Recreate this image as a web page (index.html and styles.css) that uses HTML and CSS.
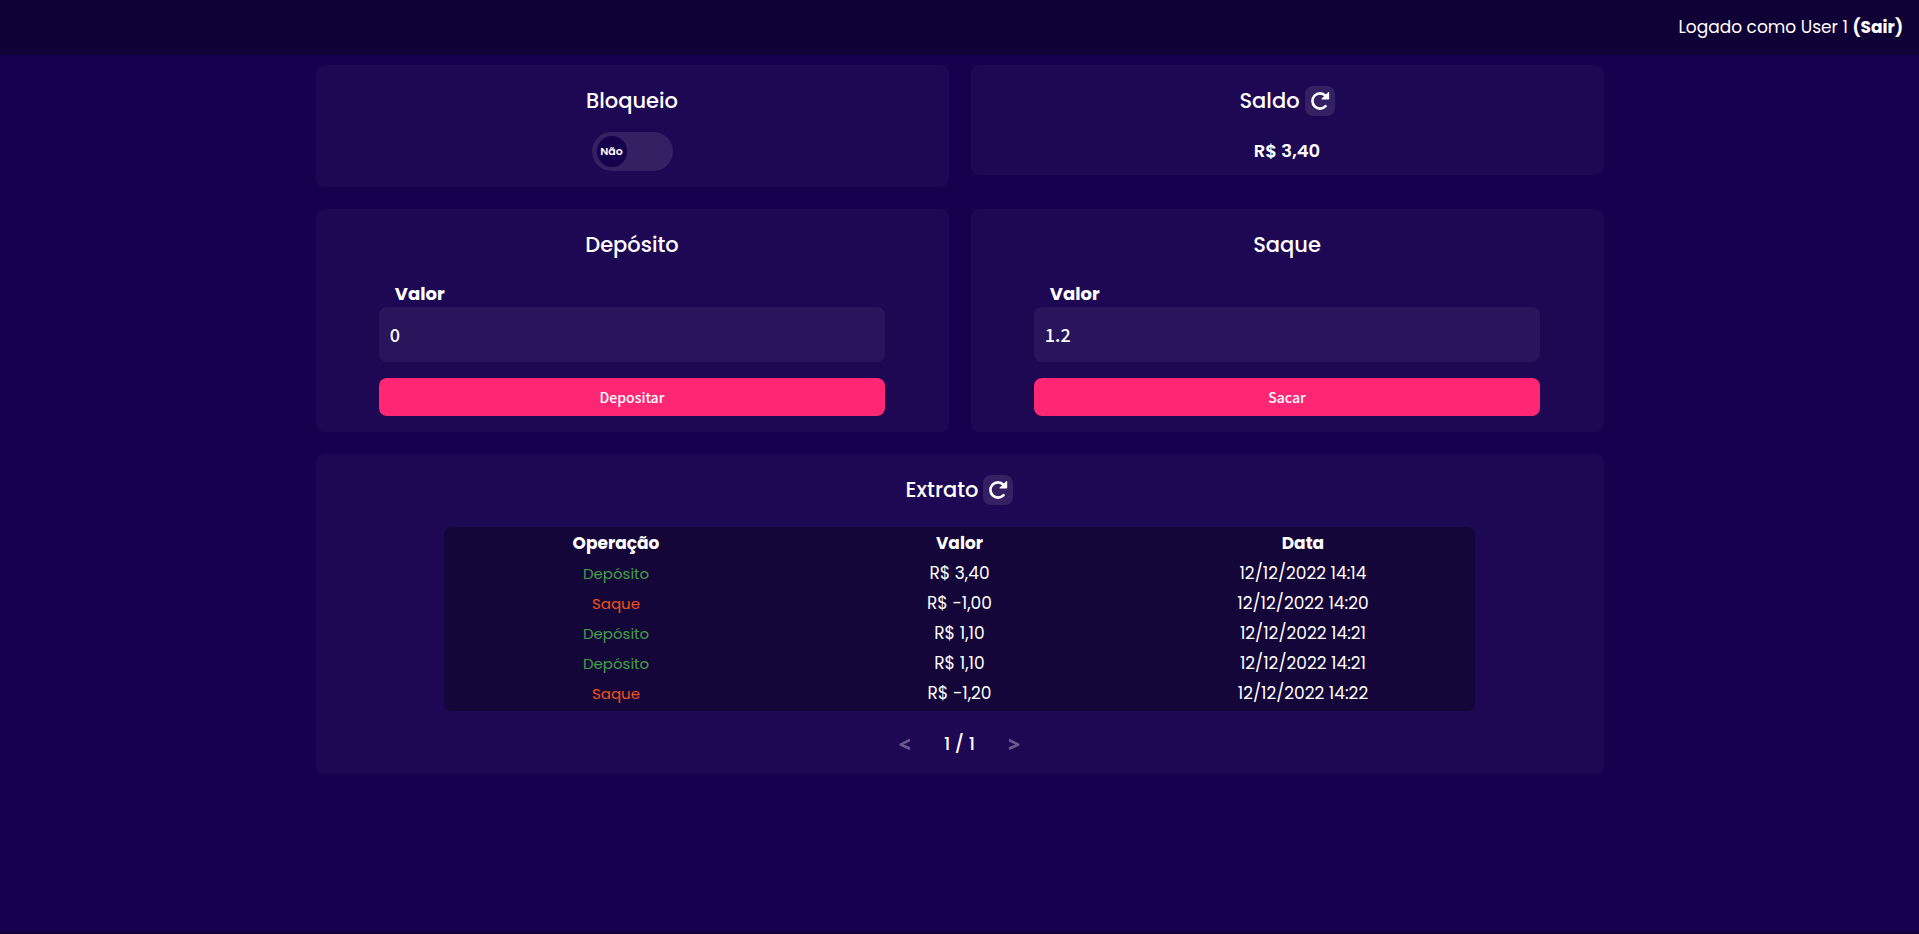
FILE: index.html
```html
<!DOCTYPE html>
<html lang="pt-BR">
<head>
<meta charset="utf-8">
<meta name="viewport" content="width=device-width, initial-scale=1">
<title>Conta</title>
<link rel="stylesheet" href="styles.css">
</head>
<body>
<header class="topbar">
  <p class="session">Logado como User 1 <a class="logout" href="#">(Sair)</a></p>
</header>
<main class="dashboard">
  <section class="card card-lock">
    <h2 class="card-title">Bloqueio</h2>
    <label class="switch">
      <input class="switch-input" type="checkbox" aria-label="Bloqueio">
      <span class="switch-knob">Não</span>
    </label>
  </section>
  <section class="card card-balance">
    <h2 class="card-title">Saldo
      <button class="refresh" type="button" aria-label="Atualizar saldo">
        <svg class="refresh-icon" viewBox="0 0 20 20" aria-hidden="true"><path d="M15.6 15.2A7.6 7.6 0 1 1 15.4 4.6" fill="none" stroke="currentColor" stroke-width="2.6" stroke-linecap="round"/><path d="M18.2 1.2q1-.7 1 .5v6.1q0 .8-.8.8h-6.3q-1.2 0-.4-1z" fill="currentColor"/></svg>
      </button>
    </h2>
    <p class="balance">R$ 3,40</p>
  </section>
  <section class="card card-form">
    <h2 class="card-title">Depósito</h2>
    <form class="form">
      <label class="field-label" for="deposit">Valor</label>
      <input class="field" id="deposit" type="text" inputmode="decimal" value="0">
      <button class="submit" type="button">Depositar</button>
    </form>
  </section>
  <section class="card card-form">
    <h2 class="card-title">Saque</h2>
    <form class="form">
      <label class="field-label" for="withdraw">Valor</label>
      <input class="field" id="withdraw" type="text" inputmode="decimal" value="1.2">
      <button class="submit" type="button">Sacar</button>
    </form>
  </section>
  <section class="card card-statement">
    <h2 class="card-title">Extrato
      <button class="refresh" type="button" aria-label="Atualizar extrato">
        <svg class="refresh-icon" viewBox="0 0 20 20" aria-hidden="true"><path d="M15.6 15.2A7.6 7.6 0 1 1 15.4 4.6" fill="none" stroke="currentColor" stroke-width="2.6" stroke-linecap="round"/><path d="M18.2 1.2q1-.7 1 .5v6.1q0 .8-.8.8h-6.3q-1.2 0-.4-1z" fill="currentColor"/></svg>
      </button>
    </h2>
    <table class="statement">
      <thead><tr><th>Operação</th><th>Valor</th><th>Data</th></tr></thead>
      <tbody>
        <tr><td class="deposit">Depósito</td><td>R$ 3,40</td><td>12/12/2022 14:14</td></tr>
        <tr><td class="withdraw">Saque</td><td>R$ -1,00</td><td>12/12/2022 14:20</td></tr>
        <tr><td class="deposit">Depósito</td><td>R$ 1,10</td><td>12/12/2022 14:21</td></tr>
        <tr><td class="deposit">Depósito</td><td>R$ 1,10</td><td>12/12/2022 14:21</td></tr>
        <tr><td class="withdraw">Saque</td><td>R$ -1,20</td><td>12/12/2022 14:22</td></tr>
      </tbody>
    </table>
    <nav class="pager" aria-label="Páginas">
      <button class="pager-button" type="button" disabled aria-label="Anterior">&lt;</button>
      <span class="pager-count">1 / 1</span>
      <button class="pager-button" type="button" disabled aria-label="Próxima">&gt;</button>
    </nav>
  </section>
</main>
</body>
</html>
```
FILE: styles.css
```css
* { box-sizing: border-box; }

body {
  margin: 0;
  min-height: 100vh;
  background: #16004d;
  border-bottom: 2px solid #100038;
  color: #fff;
  font: 400 17px/30px Poppins, Inter, "Open Sans", sans-serif;
}

h2, p { margin: 0; }
button, input { font: inherit; color: inherit; border: 0; }

.topbar {
  display: flex;
  justify-content: flex-end;
  align-items: center;
  height: 55px;
  padding: 0 16px 2px;
  background: #0f0036;
}

.logout { color: inherit; font-weight: 700; text-decoration: none; }

.dashboard {
  display: grid;
  grid-template-columns: 1fr 1fr;
  align-items: start;
  gap: 22px;
  max-width: 1288px;
  margin: 10px auto 0;
}

.card {
  display: flex;
  flex-direction: column;
  align-items: center;
  padding: 21px 0 16px;
  border-radius: 8px;
  background: #1e0753;
}

.card-balance { padding-bottom: 9px; }
.card-statement { grid-column: 1 / -1; padding-bottom: 15px; }

.card-title {
  display: flex;
  align-items: center;
  gap: 5px;
  font-size: 21px;
  line-height: 30px;
  font-weight: 500;
}

.refresh {
  display: grid;
  place-items: center;
  width: 30px;
  height: 30px;
  padding: 0;
  border-radius: 8px;
  background: #352063;
}

.refresh-icon { width: 20px; height: 20px; }

.switch {
  position: relative;
  display: flex;
  align-items: center;
  width: 81px;
  height: 39px;
  margin-top: 16px;
  padding: 4px 5px;
  border-radius: 20px;
  background: #352063;
}

.switch-input {
  position: absolute;
  inset: 0;
  width: 100%;
  height: 100%;
  margin: 0;
  opacity: 0;
}

.switch-knob {
  display: grid;
  place-items: center;
  width: 30px;
  height: 31px;
  border-radius: 50%;
  background: #16004d;
  font-size: 11px;
  line-height: 15px;
  font-weight: 600;
}

.balance { margin-top: 20px; font-size: 18px; font-weight: 600; }

.form {
  display: flex;
  flex-direction: column;
  width: 80%;
  margin-top: 21px;
}

.field-label {
  padding-left: 16px;
  font-size: 18px;
  line-height: 26px;
  font-weight: 700;
}

.field {
  width: 100%;
  height: 55px;
  padding: 0 11px 2px;
  border-radius: 8px;
  background: #2a145b;
  font-family: "Noto Sans CJK JP", "Noto Sans", sans-serif;
  font-size: 18px;
  font-weight: 500;
}

.submit {
  height: 38px;
  margin-top: 16px;
  border-radius: 8px;
  background: #ff2674;
  font-family: "Noto Sans CJK JP", "Noto Sans", sans-serif;
  font-size: 14px;
  font-weight: 500;
}

.statement {
  table-layout: fixed;
  width: 80%;
  margin-top: 22px;
  padding-bottom: 2px;
  border-spacing: 0;
  border-radius: 8px;
  background: #140638;
  text-align: center;
}

.statement th { padding: 1px 0; font-weight: 700; }
.statement td { height: 30px; padding: 0; line-height: 29px; vertical-align: baseline; }
.statement td.deposit { color: #43a047; font-size: 15px; }
.statement td.withdraw { color: #f4511e; font-size: 15px; }

.pager {
  display: flex;
  align-items: center;
  gap: 28px;
  margin-top: 18px;
}

.pager-button {
  padding: 0 5px;
  background: none;
  color: #695789;
  font-family: "Open Sans", sans-serif;
  font-size: 21px;
  font-weight: 800;
}

.pager-count { font-size: 18px; font-weight: 500; }
```
